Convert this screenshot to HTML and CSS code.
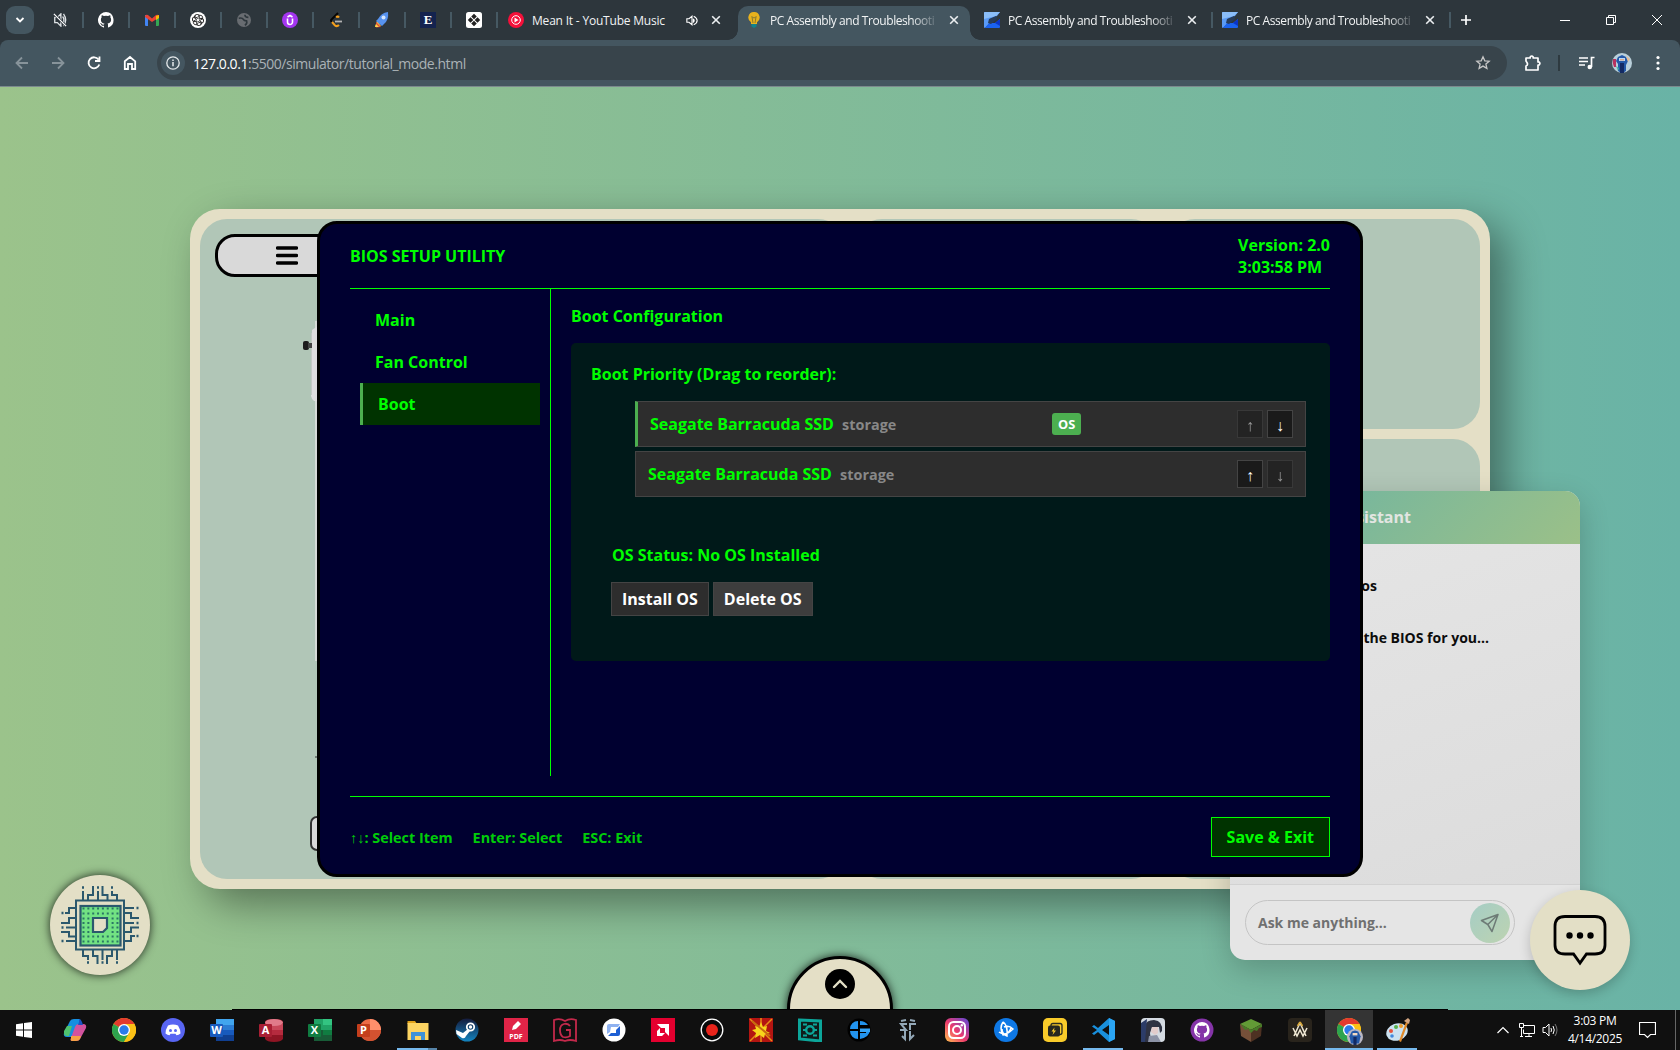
FILE: index.html
```html
<!DOCTYPE html>
<html lang="en">
<head>
<meta charset="utf-8">
<title>PC Assembly and Troubleshooting</title>
<link rel="stylesheet" href="styles.css">
</head>
<body>
<svg class="defs" width="0" height="0">
  <symbol id="close" viewBox="0 0 10 10"><path d="M1.2 1.2l7.6 7.6M8.8 1.2L1.2 8.8" stroke="#eceff1" stroke-width="1.6" fill="none"/></symbol>
  <symbol id="blue-s" viewBox="0 0 16 16"><path d="M1 0h15l-3 4-7 3-1 5-4 4q-1 0-1-1V1q0-1 1-1z" fill="#5b9bf5"/><path d="M1 0h15l-4 4-12 3V1q0-1 1-1z" fill="#8abdf8"/><path d="M1 16l4-5h6l5-4v8q0 1-1 1z" fill="#1b63f0"/><path d="M16 7v7l-5-3z" fill="#0b35c8"/><path d="M12 4L5 7l-1 4 3 1 6-5z" fill="#263c5c"/></symbol>
  <symbol id="chrome" viewBox="0 0 24 24"><circle cx="12" cy="12" r="12" fill="#fbc116"/><path d="M12 12L1.6 6A12 12 0 0122.4 6z" fill="#e33b2e"/><path d="M1.6 6A12 12 0 0012 24l5.2-9z" fill="#2da44e"/><path d="M12 6h10.4A12 12 0 0112 24l5.2-9z" fill="#fbc116"/><circle cx="12" cy="12" r="6" fill="#fff"/><circle cx="12" cy="12" r="4.7" fill="#2a7bea"/></symbol>
  <symbol id="github" viewBox="0 0 16 16"><path d="M8 0a8 8 0 00-2.5 15.6c.4 0 .5-.2.5-.4v-1.5c-2.2.5-2.7-1-2.7-1-.4-.9-.9-1.200-.9-1.200-.7-.5.1-.5.1-.5.8.1 1.200.8 1.200.8.7 1.200 1.900.9 2.300.7.1-.5.3-.9.5-1.100-1.800-.2-3.600-.9-3.600-4 0-.9.300-1.600.8-2.100-.1-.2-.4-1 .1-2.100 0 0 .7-.2 2.200.8a7.600 7.600 0 014 0c1.500-1 2.200-.8 2.200-.8.5 1.100.2 1.900.1 2.100.5.600.8 1.300.8 2.100 0 3.100-1.900 3.700-3.600 3.900.3.300.5.800.5 1.500v2.200c0 .2.100.5.500.4A8 8 0 008 0z"/></symbol>
  <linearGradient id="fade-ig" x1="0" y1="1" x2="1" y2="0"><stop offset="0" stop-color="#ffc44d"/><stop offset=".45" stop-color="#ee3b6c"/><stop offset="1" stop-color="#5a48dd"/></linearGradient>
  <linearGradient id="steam-g" x1="0" y1="0" x2="0" y2="1"><stop offset="0" stop-color="#151b3c"/><stop offset="1" stop-color="#1384c0"/></linearGradient>
</svg>

<header class="tabstrip">
  <div class="tab-search"><svg width="10" height="8" viewBox="0 0 10 8"><path d="M1.500 2L5 5.500 8.500 2" fill="none" stroke="#fff" stroke-width="1.800"/></svg></div>
  <div class="pinned"><svg width="14" height="14" viewBox="0 0 16 16"><path d="M2 5h3l4-4v14l-4-4H2z M11 4q3 4 0 8 M12 1q5 7 0 14" fill="none" stroke="#dfe3e6" stroke-width="1.500"/><path d="M1 1l14 14" stroke="#2d363c" stroke-width="3"/><path d="M1 1l14 14" stroke="#fff" stroke-width="1.400"/></svg></div>
  <div class="pinned"><svg width="16" height="16" fill="#fff"><use href="#github"/></svg></div>
  <div class="pinned"><svg width="16" height="16" viewBox="0 0 16 16"><path d="M1 3h3v11H2q-1 0-1-1z" fill="#4285f4"/><path d="M12 3h3v10q0 1-1 1h-2z" fill="#34a853"/><path d="M1 4q1-2 3-1l4 3.500V10L1 5z" fill="#ea4335"/><path d="M8 6.500L12 3q2-1 3 1v1.500L8 10z" fill="#ea4335"/><path d="M12 4l3-1v3l-3 2z" fill="#fbbc04"/></svg></div>
  <div class="pinned"><svg width="16" height="16" viewBox="0 0 16 16"><circle cx="8" cy="8" r="8" fill="#fff"/><g fill="none" stroke="#222" stroke-width=".9"><path id="petal" d="M8 5.500V4.500q1.500-2.300 3.800-.8 1.400 1.300.6 3.200L9 9"/><use href="#petal" transform="rotate(60 8 8)"/><use href="#petal" transform="rotate(120 8 8)"/><use href="#petal" transform="rotate(180 8 8)"/><use href="#petal" transform="rotate(240 8 8)"/><use href="#petal" transform="rotate(300 8 8)"/></g></svg></div>
  <div class="pinned"><svg width="14" height="14" viewBox="0 0 16 16"><circle cx="8" cy="8" r="8" fill="#686c71"/><path d="M2 6q4-1 5 1t4 2q1 3-2 5M9 2q0 3 4 3" fill="none" stroke="#2d363c" stroke-width="1.800"/></svg></div>
  <div class="pinned"><svg width="16" height="16" viewBox="0 0 16 16"><circle cx="8" cy="8" r="8" fill="#a435f0"/><path d="M5.500 6.500v3.500a2.500 2.500 0 005 0V6.500M5.500 5L8 3.500 10.500 5" fill="none" stroke="#fff" stroke-width="1.600"/></svg></div>
  <div class="pinned"><svg width="16" height="16" viewBox="0 0 16 16"><path d="M10 1L4 7q-2 1.500 0 3" fill="none" stroke="#050505" stroke-width="2"/><path d="M4 10l3 3.500q2 1.500 4-.5M8 5q2-1 3 .5" fill="none" stroke="#f5a01d" stroke-width="2"/><path d="M7 9.500h7" stroke="#b3b3b3" stroke-width="1.800"/></svg></div>
  <div class="pinned"><svg width="16" height="16" viewBox="0 0 16 16"><path d="M3 9L1 15l6-1z" fill="#f6c23c"/><path d="M4 7q3-6 10-7 1 8-4 12l-2 2-6-5z" fill="#5792ee"/><path d="M2 10l5 5-5 .5z" fill="#e34b3c"/><path d="M2 12l3 3H1z" fill="#fbd34a"/><circle cx="9.500" cy="5.500" r="2" fill="#d6e6fb"/></svg></div>
  <div class="pinned"><span class="e-icon">E</span></div>
  <div class="pinned"><svg width="16" height="16" viewBox="0 0 16 16"><rect width="16" height="16" rx="2.500" fill="#fff"/><g fill="#222"><path d="M8 1.800L10.800 4.500 8 7.300 5.200 4.500zM8 8.700l2.800 2.800L8 14.200 5.200 11.500zM4.500 5.200L7.300 8 4.500 10.800 1.800 8zM11.500 5.200L14.200 8l-2.700 2.800L8.700 8z"/></g></svg></div>
  <div class="tab tab-music">
    <svg width="16" height="16" viewBox="0 0 16 16"><circle cx="8" cy="8" r="8" fill="#f5103a"/><circle cx="8" cy="8" r="4.300" fill="none" stroke="#fff"/><path d="M6.500 5.500L10.500 8l-4 2.500z" fill="#fff"/></svg>
    <span class="tab-title">Mean It - YouTube Music</span>
    <svg class="sound" width="12" height="11" viewBox="0 0 14 12"><path d="M1 4h2.500L7 1v10L3.500 8H1z" fill="none" stroke="#fff" stroke-width="1.300"/><path d="M8.500 4v4q2-2 0-4M9 1q4 2 4 5t-4 5" fill="none" stroke="#fff" stroke-width="1.300"/></svg>
    <svg class="x" width="10" height="10"><use href="#close"/></svg>
  </div>
  <div class="tab tab-page active">
    <svg width="14" height="16" viewBox="0 0 14 16"><path d="M7 0a5.500 5.500 0 00-3 10.200V12h6v-1.800A5.500 5.500 0 007 0z" fill="#e9b21d"/><path d="M5 5l1 6M9 5l-1 6M4.500 4.500L7 6l2.500-1.500" fill="none" stroke="#8a7a30"/><path d="M4.500 12h5v2.500L7 16l-2.500-1.500z" fill="#12838c"/></svg>
    <span class="tab-title">PC Assembly and Troubleshooti</span>
    <svg class="x" width="10" height="10"><use href="#close"/></svg>
  </div>
  <div class="tab tab-page">
    <svg width="16" height="16"><use href="#blue-s"/></svg>
    <span class="tab-title">PC Assembly and Troubleshooti</span>
    <svg class="x" width="10" height="10"><use href="#close"/></svg>
  </div>
  <div class="tab tab-page sep">
    <svg width="16" height="16"><use href="#blue-s"/></svg>
    <span class="tab-title">PC Assembly and Troubleshooti</span>
    <svg class="x" width="10" height="10"><use href="#close"/></svg>
  </div>
  <svg class="new-tab" width="10" height="10" viewBox="0 0 10 10"><path d="M5 0v10M0 5h10" stroke="#fff" stroke-width="1.700"/></svg>
  <div class="window-buttons">
    <svg width="10" height="10" viewBox="0 0 10 10"><path d="M0 5.500h10" stroke="#fff"/></svg>
    <svg width="10" height="10" viewBox="0 0 10 10"><path d="M.5 2.500h7v7h-7zM2.500 2.500v-2h7v7h-2" fill="none" stroke="#fff"/></svg>
    <svg width="10" height="10" viewBox="0 0 10 10"><path d="M0 0l10 10M10 0L0 10" stroke="#fff"/></svg>
  </div>
</header>

<div class="toolbar-back">
<nav class="toolbar">
  <svg class="nav dim" width="16" height="16" viewBox="0 0 16 16"><path d="M14 8H3M8 2.500L2.500 8 8 13.500"/></svg>
  <svg class="nav dim" width="16" height="16" viewBox="0 0 16 16"><path d="M2 8h11M8 2.500L13.500 8 8 13.500"/></svg>
  <svg class="nav" width="16" height="16" viewBox="0 0 16 16"><path d="M12.500 4.500A5.500 5.500 0 1013.300 9.500M13.500 1.500v4.500H9"/></svg>
  <svg class="nav" width="16" height="16" viewBox="0 0 16 16"><path d="M2.800 6.300L8 2l5.200 4.300V14H10V9H6v5H2.800z"/></svg>
  <div class="address">
    <span class="info"><svg width="16" height="16" viewBox="0 0 16 16"><circle cx="8" cy="8" r="6.200" fill="none" stroke="#e6eaec" stroke-width="1.300"/><path d="M8 7v4.200M8 4.500v1.500" stroke="#e6eaec" stroke-width="1.500"/></svg></span>
    <span class="url"><b>127.0.0.1</b>:5500/simulator/tutorial_mode.html</span>
    <svg class="star" width="16" height="16" viewBox="0 0 16 16"><path d="M8 1.800l1.800 4 4.400.4-3.300 2.900 1 4.300L8 11.100l-3.900 2.300 1-4.300L1.800 6.200l4.400-.4z" fill="none" stroke="#c7c7c7" stroke-width="1.300"/></svg>
  </div>
  <svg class="puzzle" width="18" height="18" viewBox="0 0 18 18"><path d="M2 4h4.200V3q1.500-2 3 0v1H14v4h1q1.800 1.500 0 3h-1v5H2v-4q3-1 0-5z" fill="none" stroke="#fff" stroke-width="1.700" stroke-linejoin="round"/></svg>
  <span class="bar-sep"></span>
  <svg class="queue" width="16" height="14" viewBox="0 0 16 14"><path d="M0 2h9M0 5.500h9M0 9h6M12.500 11V1.500H15.500" fill="none" stroke="#fff" stroke-width="1.700"/><circle cx="10.800" cy="11" r="2.300" fill="#fff"/></svg>
  <svg class="avatar" width="20" height="20" viewBox="0 0 20 20"><circle cx="10" cy="10" r="10" fill="#b9cfda"/><path d="M1 6h3v8H2q-2-4-1-8z" fill="#b8335f"/><path d="M6 4l4-2 4 2 2 4-2 4v6q-4 3-8 0v-7L4 8z" fill="#2459a8"/><path d="M8 10h4v10H8z" fill="#132a63"/><path d="M7 5h6v3H7z" fill="#bcd7f5"/><path d="M8 6h4v1.500H8z" fill="#d9a98a"/><path d="M14 3l4 3-2 3z" fill="#e6bd96"/><path d="M4 13l3 2-1 3z" fill="#41b5a8"/></svg>
  <svg width="4" height="16" viewBox="0 0 4 16"><circle cx="2" cy="2.500" r="1.600" fill="#fff"/><circle cx="2" cy="8" r="1.600" fill="#fff"/><circle cx="2" cy="13.500" r="1.600" fill="#fff"/></svg>
</nav>
</div>

<main class="page">
  <section class="workbench">
    <div class="bench-left">
      <div class="menu-button"><svg width="22" height="19" viewBox="0 0 22 19"><path d="M1.500 2h19M1.500 9.500h19M1.500 17h19" stroke="#000" stroke-width="3.400" stroke-linecap="round"/></svg></div>
      <svg class="pc-case" width="16" height="440" viewBox="0 0 16 440"><path d="M15 0v340" stroke="#d6dad6" stroke-width="2"/><path d="M11 9q4-3 5-3v74h-3q-2-1-3-5z" fill="#dedede"/><path d="M10.500 12v62" stroke="#c3c9c4"/><rect x="2" y="20" width="6" height="9" rx="2" fill="#1c1c1c"/><path d="M7 22h4v5H7z" fill="#444"/><path d="M14 436h2" stroke="#333"/></svg>
      <div class="case-button"></div>
    </div>
    <div class="bench-mid"></div>
    <div class="bench-right"><div></div><div></div></div>
  </section>

  <aside class="chat">
    <header>Assistant</header>
    <div class="messages"><p class="m1">bios</p><p class="m2">the BIOS for you...</p></div>
    <footer><div class="ask"><span>Ask me anything...</span><span class="send"><svg width="20" height="20" viewBox="0 0 20 20"><path d="M18 1.500L1.500 7.500l6.300 4L12 18.500zM18 1.500L7.800 11.500" fill="none" stroke="#6d7b76" stroke-width="1.500" stroke-linejoin="round"/></svg></span></div></footer>
  </aside>

  <section class="bios">
    <header class="bios-head"><span>BIOS SETUP UTILITY</span><div>Version: 2.0<br>3:03:58 PM</div></header>
    <div class="bios-main">
      <nav class="bios-nav"><a>Main</a><a>Fan Control</a><a class="current">Boot</a></nav>
      <div class="bios-content">
        <h3>Boot Configuration</h3>
        <div class="boot-panel">
          <p>Boot Priority (Drag to reorder):</p>
          <ul class="drives">
            <li class="first"><span class="name">Seagate Barracuda SSD <small>storage</small></span><em>OS</em><span class="moves"><i class="off">↑</i><i>↓</i></span></li>
            <li><span class="name">Seagate Barracuda SSD <small>storage</small></span><span class="moves"><i>↑</i><i class="off">↓</i></span></li>
          </ul>
          <div class="os-status">OS Status: No OS Installed</div>
          <div class="os-buttons"><button>Install OS</button><button class="hover">Delete OS</button></div>
        </div>
      </div>
    </div>
    <footer class="bios-foot"><div class="keys"><span><span class="arrows">↑↓</span>: Select Item</span><span>Enter: Select</span><span>ESC: Exit</span></div><button>Save &amp; Exit</button></footer>
  </section>

  <div class="chip"><svg width="100" height="100" viewBox="0 0 100 100">
    <g fill="none" stroke="#2b586d" stroke-width="2"><rect x="26" y="25.500" width="48" height="49"/><path d="M33 16v9M43 11v9h-5v5M48 16v9M52.500 11v9h5v5M62 16v4h5v5M33 75v6h5v4M43 75v6h4.500v8M52.500 75v10M62 75v6h-5v8M67 75v10M25 33h-6v5h-4M25 43h-6v5h-8M25 52.500H16M25 61.500h-6V57h-8M25 66h-9M75 33h9M75 38h6v5h8M75 48h9M75 57h6v-4.500h8M75 66h6v-5h4"/></g>
    <path d="M32 12.500h2M47 12.500h2M61 12.500h2M37 87.500h2M51.500 87.500h2M66 87.500h2M11.500 38h2M11.500 52.500h2M11.500 66h2M86.500 33h2M86.500 48h2M86.500 61h2" stroke="#2b586d" stroke-width="2.400"/>
    <rect x="30.500" y="31" width="40" height="39.500" fill="#72e283" stroke="#2b586d" stroke-width="2.200"/>
    <g stroke="#2b7765" stroke-width="2" stroke-dasharray="2 2.850"><path d="M32.500 33.500h36M32.500 38.500h36M32.500 61.500h36M32.500 66.500h36M32.500 43.500h8M32.500 48h8M32.500 52.500h8M32.500 57h8M61.600 43.500h8M61.600 48h8M61.600 52.500h8M61.600 57h8"/></g>
    <path d="M43 43h14v10l-4 4H43z" fill="#e3dfc6" stroke="#2b586d" stroke-width="2.200"/>
  </svg></div>

  <div class="tray-line"></div>
  <div class="tray-tab"><span><svg width="16" height="10" viewBox="0 0 16 10"><path d="M2 8l6-6 6 6" fill="none" stroke="#e3dfc6" stroke-width="2.400" stroke-linecap="round"/></svg></span></div>

  <div class="chat-bubble"><svg width="54" height="52" viewBox="0 0 54 52"><path d="M12 2.500h30q10 0 10 10V31q0 9-10 9h-8.500L27 49l-6.500-9H12q-10 0-10-9V12.500q0-10 10-10z" fill="none" stroke="#000" stroke-width="2.800"/><g fill="#000"><circle cx="16.500" cy="21.500" r="3.200"/><circle cx="27" cy="21.500" r="3.200"/><circle cx="37.500" cy="21.500" r="3.200"/></g></svg></div>
</main>

<footer class="taskbar">
  <div class="app start"><svg width="16" height="16" viewBox="0 0 16 16" fill="#fff"><path d="M0 2.300l7-1v6.200H0zM8 1.100L16 0v7.500H8zM0 8.500h7v6.200l-7-1zM8 8.500h8V16l-8-1.100z"/></svg></div>
  <div class="app"><svg viewBox="0 0 24 24"><path d="M7 3q1-2 4-2h5q2 0 1 3l-4 12q-1 3-4 3H4q-4 0-3-4z" fill="#168fe0"/><path d="M1 13l3-5h5L6 18H4q-3 0-3-3z" fill="#4fc36e"/><path d="M17 21q-1 2-4 2H9q-2 0-1-3l4-11q1-3 4-3h4q4 0 3 4z" fill="#d2539e"/><path d="M8 18h10l-1 3q-1 2-4 2H9q-2 0-1-3z" fill="#f6a145"/><path d="M16 1q2 0 3 3l1 3h-5l1-3z" fill="#1d54c4"/></svg></div>
  <div class="app"><svg><use href="#chrome"/></svg></div>
  <div class="app"><svg viewBox="0 0 24 24"><circle cx="12" cy="12" r="12" fill="#5865f2"/><path d="M7 7.500q5-2 10 0 2.500 4 2.500 8-2 1.500-4 1.700l-1-1.500h-5l-1 1.500q-2-.2-4-1.700 0-4 2.500-8z" fill="#fff"/><circle cx="9.500" cy="12.500" r="1.500" fill="#5865f2"/><circle cx="14.500" cy="12.500" r="1.500" fill="#5865f2"/></svg></div>
  <div class="app"><svg viewBox="0 0 24 24"><path d="M6 1h18v6H6z" fill="#41a5ee"/><path d="M6 7h18v5H6z" fill="#2b7cd3"/><path d="M6 12h18v5H6z" fill="#185abd"/><path d="M6 17h18v6H6z" fill="#103f91"/><rect y="6" width="13" height="13" rx="1" fill="#185abd"/><text x="6.500" y="16" class="letter">W</text></svg></div>
  <div class="app"><svg viewBox="0 0 24 24"><path d="M6 4q0-3 9-3t9 3v17q-2 3-9 3t-9-3z" fill="#8f1524"/><path d="M6 4h18v13H6z" fill="#b52b3e"/><path d="M6 6h18v6H6z" fill="#c8485a"/><ellipse cx="15" cy="4.500" rx="9" ry="3.500" fill="#e07b8a"/><rect y="6" width="13" height="13" rx="1" fill="#a81f33"/><text x="6.500" y="16" class="letter">A</text></svg></div>
  <div class="app"><svg viewBox="0 0 24 24"><path d="M6 1h18v22H6z" fill="#21a366"/><path d="M15 1h9v6h-9z" fill="#33c481"/><path d="M6 12h9v11H6z" fill="#185c37"/><path d="M15 12h9v5h-9z" fill="#107c41"/><path d="M15 17h9v6h-9z" fill="#185c37"/><rect y="6" width="13" height="13" rx="1" fill="#107c41"/><text x="6.500" y="16" class="letter">X</text></svg></div>
  <div class="app"><svg viewBox="0 0 24 24"><circle cx="13" cy="12" r="11" fill="#ed6c47"/><path d="M13 1a11 11 0 0111 11H13z" fill="#ff8f6b"/><path d="M2 12h22a11 11 0 01-22 0z" fill="#d35230"/><rect y="6" width="13" height="13" rx="1" fill="#c43e1c"/><text x="6.500" y="16" class="letter">P</text></svg></div>
  <div class="app open stacked"><svg viewBox="0 0 24 24"><path d="M1.500 3H9l2 3H1.500z" fill="#e0a21a"/><path d="M1.500 5h21v17h-21z" fill="#fcd462"/><path d="M5 22v-8h14v8h-4v-4H9v4z" fill="#3d92d8"/></svg></div>
  <div class="app"><svg viewBox="0 0 24 24"><circle cx="12" cy="12" r="11.500" fill="url(#steam-g)"/><circle cx="15.500" cy="9" r="3.700" fill="none" stroke="#fff" stroke-width="1.800"/><circle cx="15.500" cy="9" r="1.700" fill="#fff"/><path d="M1 12l7 3 5-4 2 2-4 5q-1 3-4 2L1.500 16z" fill="#fff"/></svg></div>
  <div class="app"><svg viewBox="0 0 24 24"><rect width="24" height="24" fill="#e02447"/><path d="M8 12l1-4 5-5 3 3-5 5z" fill="#fff"/><text x="12" y="21" class="letter small">PDF</text></svg></div>
  <div class="app"><svg viewBox="0 0 24 24"><path d="M1 2q6-2 11 1 5-3 11-1v21q-6-2-11 0-5-2-11 0z" fill="none" stroke="#c3294b" stroke-width="1.800"/><path d="M17 8q-2-3-6-2-4 1-4 6t3 7q4 1 7-1v-6h-4" fill="none" stroke="#c3294b" stroke-width="1.800"/></svg></div>
  <div class="app"><svg viewBox="0 0 24 24"><circle cx="12" cy="12" r="11.500" fill="#fff"/><path d="M7 6h11l-2 3H9l-1 5-3 2V8q0-2 2-2z" fill="#8fb2f0"/><path d="M6 18l3-3h5v-3l4-4v8q0 2-2 2z" fill="#1d5fd4"/></svg></div>
  <div class="app"><svg viewBox="0 0 24 24"><rect width="24" height="24" fill="#e4002f"/><path d="M6 6h12v12l-4-4v-4h-4zM6 13l3-3v5h5l-3 3H6z" fill="#fff"/></svg></div>
  <div class="app"><svg viewBox="0 0 24 24"><circle cx="12" cy="12" r="10.800" fill="#090909" stroke="#fff" stroke-width="1.300"/><circle cx="12" cy="12" r="6" fill="#e9241b"/></svg></div>
  <div class="app"><svg viewBox="0 0 24 24"><rect width="24" height="24" fill="#b41511"/><path d="M1 1l22 22M23 1L1 23M12 0v24" stroke="#e88d16" stroke-width="1.500"/><path d="M6 8l4 1 2-5 2 5 4-1-1 5 4 2-5 1-1 4-4-3-5 3 1-5-4-3 4-1z" fill="#f8d51c"/><path d="M3 3l18 15" stroke="#c76a10" stroke-width="2"/></svg></div>
  <div class="app"><svg viewBox="0 0 24 24"><path d="M1.500 2l21 1v20l-21-2z" fill="#101c1b" stroke="#0ca69a" stroke-width="3"/><circle cx="12" cy="12" r="3.800" fill="none" stroke="#0ca69a" stroke-width="2.400"/><path d="M5 6.500h4M15 6.500h4M5 17.500h4M15 17.500h4M5 12h3M16 12h3" stroke="#0ca69a" stroke-width="2"/></svg></div>
  <div class="app"><svg viewBox="0 0 24 24"><circle cx="12" cy="12" r="11.500" fill="#000"/><path d="M3 11a8 8 0 018-8v8zM13 3q5 0 8 4h-8zM3 13h8v8a8 8 0 01-8-8zM13 15h6v-4h4q0 8-10 10z" fill="#2293ed"/><path d="M12 10.500h11v3.500H12z" fill="#35a4f7"/><path d="M1 12h12M12 2v20" stroke="#000" stroke-width="1.800"/></svg></div>
  <div class="app"><svg viewBox="0 0 24 24"><path d="M5 3l5-1M14 2l5 1M11 6H5l5 6H4M20 6h-6v6M9 13v8l-3-3M14 13v8l4-4" fill="none" stroke="#93a8b8" stroke-width="2"/></svg></div>
  <div class="app"><svg viewBox="0 0 24 24"><rect width="24" height="24" rx="6" fill="url(#fade-ig)"/><rect x="4" y="4" width="16" height="16" rx="4.500" fill="none" stroke="#fff" stroke-width="2"/><circle cx="12" cy="12" r="4" fill="none" stroke="#fff" stroke-width="2"/><circle cx="16.800" cy="7.200" r="1.200" fill="#fff"/></svg></div>
  <div class="app"><svg viewBox="0 0 24 24"><circle cx="12" cy="12" r="12" fill="#0e78e5"/><g fill="none" stroke="#fff" stroke-width="1.500"><path d="M9 4q5 3 4 14-5-2-5-7M5 14q6 5 14-3-4-4-9-2M9 4q-4 6 0 13 6-1 8-7"/></g></svg></div>
  <div class="app"><svg viewBox="0 0 24 24"><rect width="24" height="24" rx="5" fill="#f9cb2a"/><rect x="8" y="5.500" width="11" height="11" rx="2" fill="none" stroke="#2a2a20" stroke-width="1.300"/><rect x="5" y="7.500" width="12" height="11" rx="2" fill="#26261f"/><path d="M11.500 9.500l-3 4h2l-1 3.500 3.500-4.500h-2z" fill="#f9cb2a"/></svg></div>
  <div class="app open"><svg viewBox="0 0 24 24"><path d="M17 0l6 3v18l-6 3L6 14l-4 3-2-1.500L5 12 0 8.500 2 7l4 3zM17 7l-7 5 7 5z" fill="#1990dd"/><path d="M17 0l6 3v18l-6 3z" fill="#2ba6f5"/></svg></div>
  <div class="app"><svg viewBox="0 0 24 24"><rect width="24" height="24" rx="4" fill="#d5dbe2"/><path d="M4 8q1-6 9-6 9 1 8 11l-2 2-1-6-7 0-2 6 1 9H2z" fill="#2f3343"/><path d="M0 5l6-4-2 23H0z" fill="#2c3c68"/><path d="M11 9h6v6l-3 2-4-3z" fill="#e2cccb"/><path d="M8 18l8-1 4 7H7z" fill="#8d93a6"/></svg></div>
  <div class="app"><svg viewBox="0 0 24 24"><circle cx="12" cy="12" r="11.500" fill="#8534a8"/></svg><svg class="over" viewBox="0 0 16 16" fill="#fff"><use href="#github"/></svg></div>
  <div class="app"><svg viewBox="0 0 24 24"><path d="M12 1l11 5-11 6L1 6z" fill="#629b36"/><path d="M1 6l11 6v12L2 18z" fill="#765039"/><path d="M23 6l-11 6v12l10-6z" fill="#4d3122"/><path d="M1 6l11 6 11-6v3l-3 1-2 3-3-1-3 3-3-4-3 1-4-5z" fill="#477c28"/></svg></div>
  <div class="app"><svg viewBox="0 0 24 24"><rect width="24" height="24" rx="4" fill="#29241c"/><path d="M5 10l4 8 3-6 3 6 4-8M12 5L6 18M12 5l6 13" fill="none" stroke="#efe8d4" stroke-width="1.500"/><path d="M12 4l-2.500 4M12 4l2.500 4" stroke="#d8a83c" stroke-width="1.600"/></svg></div>
  <div class="app focus"><svg><use href="#chrome"/></svg><svg class="badge" viewBox="0 0 20 20"><circle cx="10" cy="10" r="10" fill="#b9b7c4"/><path d="M6 3l4-1 4 1 3 6-2 9H5L3 9z" fill="#2459a8"/><path d="M8 10h4v10H8z" fill="#132a63"/><path d="M7 5h6v3H7z" fill="#f2d9c2"/></svg></div>
  <div class="app open"><svg viewBox="0 0 24 24"><ellipse cx="11" cy="14" rx="11" ry="8.500" fill="#cbe2f1" transform="rotate(-20 11 14)"/><circle cx="5" cy="13" r="2" fill="#e5533d"/><circle cx="10" cy="9" r="2" fill="#55b04a"/><circle cx="15" cy="8" r="2" fill="#ee9a2b"/><circle cx="6" cy="18" r="1.800" fill="#4289dd"/><path d="M20 4l-7 19 2 1L22 5z" fill="#e08a2b"/><path d="M18 3l4-3 2 2-1 4z" fill="#d6a782"/></svg></div>
  <div class="tray">
    <svg width="12" height="8" viewBox="0 0 12 8"><path d="M.5 7L6 1.500 11.500 7" fill="none" stroke="#fff" stroke-width="1.200"/></svg>
    <svg width="16" height="14" viewBox="0 0 16 14"><path d="M5 2.500h10.500v8H4.500v-4M10 10.500v3M6 13.500h7M.5.500h4v4h-4zM2.500 4.500v9M1 13.500h3" fill="none" stroke="#fff"/></svg>
    <svg width="17" height="14" viewBox="0 0 17 14"><path d="M1 4.500h2.500L7 1v12L3.500 9.500H1zM9 5q1 2 0 4M11 3q2.500 4 0 8" fill="none" stroke="#fff"/><path d="M13 1q4 6 0 12" fill="none" stroke="#777"/></svg>
    <div class="clock">3:03 PM<br>4/14/2025</div>
    <svg width="17" height="17" viewBox="0 0 17 17"><path d="M.5.500h16v12h-5l-3 3-3-3h-5z" fill="none" stroke="#fff" stroke-width="1.200"/></svg>
    <span class="show-desktop"></span>
  </div>
</footer>
</body>
</html>
```
FILE: styles.css
```css
* { box-sizing: border-box; }
body {
  margin: 0;
  width: 1680px;
  height: 1050px;
  overflow: hidden;
  display: flex;
  flex-direction: column;
  font-family: "Open Sans", "Noto Sans", sans-serif;
}
svg { display: block; flex: none; }
.defs { position: absolute; }

/* browser tabs */
.tabstrip {
  height: 40px;
  flex: none;
  background: #2d363c;
  display: flex;
  align-items: center;
  padding-left: 6px;
}
.tab-search {
  width: 28px;
  height: 28px;
  border-radius: 9px;
  background: #445660;
  display: grid;
  place-items: center;
  margin-right: 4px;
}
.pinned {
  width: 46px;
  height: 16px;
  display: grid;
  place-items: center;
  border-right: 2px solid #465963;
}
.e-icon {
  width: 16px;
  height: 16px;
  background: #14234f;
  color: #fff;
  font: bold 13px/16px "Liberation Serif", serif;
  text-align: center;
}
.tab {
  display: flex;
  align-items: center;
  height: 34px;
  font: 12px "Open Sans", sans-serif;
  letter-spacing: -.2px;
  color: #f1f3f4;
  white-space: nowrap;
  position: relative;
  margin-top: 6px;
  padding-bottom: 6px;
}
.tab-title { margin-left: 8px; }
.x { margin-left: auto; }
.tab-music { width: 240px; padding-left: 10px; padding-right: 17px; }
.sound { margin-left: auto; }
.tab-music .x { margin-left: 13px; }
.tab-page { width: 238px; padding: 0 33px 6px 14px; }
.tab-page .tab-title {
  width: 168px;
  letter-spacing: -.43px;
  -webkit-mask-image: linear-gradient(90deg, #000 84%, rgba(0, 0, 0, .15) 99%);
  mask-image: linear-gradient(90deg, #000 84%, rgba(0, 0, 0, .15) 99%);
}
.active { width: 232px; padding: 0 11px 6px 9px; background: #445660; border-radius: 10px 10px 0 0; }
.active .tab-title { margin-left: 9px; }
.active + .tab-page { width: 241px; padding-right: 14px; }
.active::before, .active::after {
  content: "";
  position: absolute;
  bottom: 0;
  width: 10px;
  height: 10px;
}
.active::before { left: -10px; background: radial-gradient(circle at 0 0, transparent 9.5px, #445660 10px); }
.active::after { right: -10px; background: radial-gradient(circle at 100% 0, transparent 9.5px, #445660 10px); }
.sep { border-left: 2px solid #465963; height: 16px; margin: 0; padding: 0 14px 0 9px; border-right: 2px solid #465963; width: 240px; }
.new-tab { margin-left: 10px; }
.window-buttons { margin-left: auto; display: flex; gap: 36px; padding-right: 18px; }

/* browser toolbar */
.toolbar-back { flex: none; background: #2d363c; }
.toolbar {
  height: 47px;
  background: #445660;
  border-radius: 8px 8px 0 0;
  border-bottom: 1px solid #7c8a8e;
  display: flex;
  align-items: center;
  padding: 0 20px 0 14px;
}
.nav { margin-right: 20px; fill: none; stroke: #fff; stroke-width: 1.800; }
.dim { stroke: #87939a; }
.address {
  width: 1350px;
  height: 34px;
  border-radius: 17px;
  background: #38444b;
  margin-left: -1px;
  display: flex;
  flex: none;
  align-items: center;
  padding: 0 16px 0 4px;
}
.info { width: 24px; height: 24px; border-radius: 50%; background: #445660; display: grid; place-items: center; }
.url { margin-left: 8px; font: 14px "Open Sans", sans-serif; letter-spacing: -.46px; color: #aab2b6; }
.url b { font-weight: 400; color: #fff; }
.star { margin-left: auto; }
.puzzle { margin-left: 17px; }
.bar-sep { width: 2px; height: 16px; background: #2e3a40; margin: 0 19px 0 16px; }
.avatar { margin: 0 24px 0 17px; }

/* simulator page */
.page {
  flex: 1;
  position: relative;
  background: linear-gradient(90deg, #9bc38b, #69b3a6);
  overflow: hidden;
  font-weight: 700;
}
.workbench {
  position: absolute;
  left: 190px;
  top: 122px;
  width: 1300px;
  height: 680px;
  padding: 10px;
  display: grid;
  grid-template-columns: 645px 303px 312px;
  gap: 10px;
  background: #e4dfc6;
  border-radius: 30px;
  box-shadow: 15px 15px 40px rgba(0, 0, 0, .4);
}
.bench-left, .bench-mid, .bench-right div { background: #b1c6b7; border-radius: 27px; }
.bench-left { position: relative; padding: 15px; }
.bench-right { display: grid; grid-template-rows: 210px 1fr; gap: 10px; }
.menu-button {
  width: 200px;
  height: 43px;
  border: 3px solid #000;
  border-radius: 20px;
  background: #d9d9d9;
  display: flex;
  align-items: center;
  padding-left: 58px;
}
.pc-case { position: absolute; left: 101px; top: 102px; }
.case-button {
  position: absolute;
  left: 110px;
  top: 597px;
  width: 60px;
  height: 35px;
  border: 2px solid #333;
  border-radius: 7px;
  background: #d9d9d9;
}

/* assistant chat */
.chat {
  position: absolute;
  left: 1230px;
  top: 404px;
  width: 350px;
  height: 469px;
  border-radius: 15px;
  overflow: hidden;
  background: #e5e5e5;
  display: flex;
  flex-direction: column;
  box-shadow: 0 10px 30px rgba(0, 0, 0, .2);
}
.chat header {
  height: 53px;
  padding: 0 169px 0 0;
  text-align: right;
  line-height: 52px;
  color: #e2e5e1;
  font-size: 16px;
  background: linear-gradient(135deg, #69b3a5, #9bc088);
}
.messages { flex: 1; background: linear-gradient(160deg, #e5e5e5, #dcdcdc); font-size: 14px; text-align: right; color: #0c0c0c; }
.messages p { margin: 0; line-height: 20px; }
.m1 { padding: 32px 203px 0 0; }
.messages .m2 { padding: 0; margin: 32px 91px 0 0; }
.chat footer { height: 76px; border-top: 1px solid #d2d2d2; padding: 15px; }
.ask {
  width: 270px;
  height: 45px;
  border: 1px solid #c4c4c4;
  border-radius: 23px;
  display: flex;
  align-items: center;
  justify-content: space-between;
  padding: 0 4px 0 12px;
  font-size: 14px;
  color: #707070;
}
.send { width: 40px; height: 40px; border-radius: 50%; display: grid; place-items: center; background: linear-gradient(135deg, #a5cdc5, #bdd3b1); }

/* BIOS dialog */
.bios {
  position: absolute;
  left: 317px;
  top: 134px;
  width: 1046px;
  height: 656px;
  border: 3px solid #000;
  border-radius: 20px;
  background: #000030;
  color: #0f0;
  padding: 10px 30px 17px;
  font-size: 16px;
  line-height: 22px;
  display: flex;
  flex-direction: column;
}
.bios-head {
  height: 55px;
  border-bottom: 1px solid #0f0;
  display: flex;
  justify-content: space-between;
  align-items: center;
  padding-bottom: 10px;
}
.bios-main { height: 507px; display: flex; padding-bottom: 20px; }
.bios-nav { width: 201px; border-right: 1px solid #0f0; padding: 10px; display: flex; flex-direction: column; }
.bios-nav a { height: 42px; padding: 10px 15px; }
.bios-nav .current { background: #030; border-left: 3px solid #4caf50; }
.bios-content { flex: 1; padding: 16px 0 0 20px; }
h3 { margin: 0 0 16px; font-size: 16px; }
.boot-panel { height: 318px; border-radius: 5px; background: #001919; padding: 20px; }
.boot-panel p { margin: 0 0 16px; }
.drives { list-style: none; margin: 0; padding: 0 4px 0 44px; }
.drives li {
  height: 46px;
  margin-bottom: 4px;
  background: #2d2d2d;
  border: 1px solid #444;
  padding: 0 12px;
  display: flex;
  align-items: center;
  justify-content: space-between;
}
.drives .first { border-left: 3px solid #4caf50; }
.name { white-space: nowrap; }
.drives small { font-size: 14.4px; color: #888; margin-left: 4px; }
.drives em { font-style: normal; font-size: 12.8px; line-height: 16px; color: #fff; background: #4caf50; border-radius: 3px; padding: 3px 6px; }
.moves { display: flex; gap: 4px; }
.moves i {
  width: 26px;
  height: 28px;
  font: 16px/30px "Liberation Sans", sans-serif;
  color: #fff;
  background: #1a1a1a;
  border: 1px solid #444;
  text-align: center;
}
.moves .off { opacity: .5; }
.os-status { margin: 47px 0 16px 21px; }
.os-buttons { display: flex; gap: 4px; margin-left: 20px; }
.os-buttons button {
  font: bold 16px/22px "Open Sans", sans-serif;
  height: 34px;
  padding: 0 10px;
  color: #fff;
  background: #2d2d2d;
  border: 1px solid #444;
}
.os-buttons .hover { background: #3d3d3d; }
.bios-foot { border-top: 1px solid #0f0; padding-top: 20px; display: flex; justify-content: space-between; align-items: center; }
.keys { display: flex; gap: 20px; font-size: 14.4px; color: #00cc09; padding-top: 1px; }
.arrows { font-family: "Liberation Sans", sans-serif; font-weight: 400; }
.bios-foot button {
  height: 40px;
  padding: 0 15px;
  font: bold 16px/22px "Open Sans", sans-serif;
  color: #0f0;
  background: #030;
  border: 1px solid #0f0;
}

/* floating controls */
.chip {
  position: absolute;
  left: 50px;
  top: 788px;
  width: 100px;
  height: 100px;
  border-radius: 50%;
  background: #e3dfc6;
  box-shadow: 0 0 10px rgba(0, 0, 0, .8);
}
.tray-tab {
  position: absolute;
  left: 787px;
  top: 869px;
  width: 106px;
  height: 106px;
  border: 3px solid #000;
  border-radius: 50%;
  background: #e4dfc6;
  box-shadow: 0 0 10px rgba(0, 0, 0, .8);
  display: flex;
  justify-content: center;
  padding-top: 10px;
}
.tray-tab span { width: 30px; height: 30px; border-radius: 50%; background: #000; display: grid; place-items: center; }
.tray-line { position: absolute; z-index: 1; left: 232px; bottom: 0; width: 1216px; height: 1px; background: #000; }
.chat-bubble {
  position: absolute;
  left: 1530px;
  top: 803px;
  width: 100px;
  height: 100px;
  border-radius: 50%;
  background: #e3dfc6;
  display: grid;
  place-items: center;
  box-shadow: 0 4px 12px rgba(0, 0, 0, .2);
}

/* desktop taskbar */
.taskbar { height: 40px; flex: none; background: #101010; display: flex; position: relative; }
.app { width: 49px; height: 40px; display: grid; place-items: center; position: relative; flex: none; }
.app svg { width: 24px; height: 24px; }
.app.start { width: 50px; padding-right: 2px; }
.app.start svg { width: 16px; height: 16px; }
.letter { font: bold 11px "Open Sans", sans-serif; fill: #fff; text-anchor: middle; }
.small { font-size: 7px; }
.app .over, .app .badge { position: absolute; width: 16px; height: 16px; }
.app .badge { right: 10px; bottom: 5px; }
.open::after, .focus::after {
  content: "";
  position: absolute;
  bottom: 0;
  left: 4px;
  right: 5px;
  height: 2px;
  background: #76b9ed;
}
.focus { background: linear-gradient(#343434, #343434) 1px 0 / 48px 40px no-repeat; }
.focus::after { left: 1px; right: 0; }
.stacked::after { background: linear-gradient(90deg, #76b9ed 31px, #5684a8 31px); }
.tray { position: absolute; right: 0; top: 0; height: 40px; display: flex; align-items: center; color: #fff; }
.tray svg:nth-child(1) { margin-right: 10px; }
.tray svg:nth-child(2) { margin-right: 7px; }
.clock { width: 58px; margin: 0 15px 0 7px; font: 12px/18px "Open Sans", sans-serif; letter-spacing: -.3px; text-align: center; }
.show-desktop { width: 5px; height: 40px; border-left: 1px solid #666; margin-left: 19px; }
```
